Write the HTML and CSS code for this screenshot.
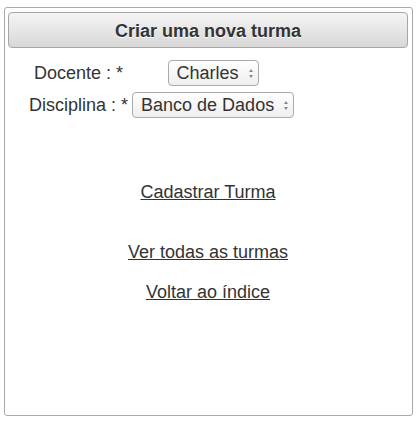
FILE: index.html
```html
<!DOCTYPE html>
<html lang="pt">
<head>
<meta charset="utf-8">
<title>Criar uma nova turma</title>
<link rel="stylesheet" href="styles.css">
</head>
<body>
<div class="panel">
  <div class="header">Criar uma nova turma</div>
  <form class="form">
    <table class="fields">
      <tr>
        <td class="label">Docente : *</td>
        <td class="field"><span class="sel"><select><option>Charles</option></select></span></td>
      </tr>
      <tr>
        <td class="label">Disciplina : *</td>
        <td class="field"><span class="sel"><select><option>Banco de Dados</option></select></span></td>
      </tr>
    </table>
    <div class="links">
      <a href="#" class="link link-submit">Cadastrar Turma</a>
      <a href="#" class="link link-all">Ver todas as turmas</a>
      <a href="#" class="link link-back">Voltar ao índice</a>
    </div>
  </form>
</div>
</body>
</html>
```

FILE: styles.css
```css
html, body {
  margin: 0;
  padding: 0;
  background: #fff;
}

body {
  font-family: "Liberation Sans", Arial, sans-serif;
  font-size: 18px;
  color: #333;
}

.panel {
  box-sizing: border-box;
  width: 409px;
  height: 409px;
  margin: 7px 0 0 4px;
  padding: 4px 4px 0 3px;
  border: 1px solid #aaa;
  border-radius: 3px;
}

.header {
  box-sizing: border-box;
  height: 36px;
  padding-top: 1px;
  line-height: 34px;
  text-align: center;
  font-weight: bold;
  font-size: 18px;
  color: #333;
  text-shadow: 0 1px 0 #fff;
  border: 1px solid #a6a6a6;
  border-radius: 4px;
  background: linear-gradient(#f5f5f5, #d7d7d7);
}

.form {
  margin: 0;
}

.fields {
  margin: 8px 0 0 18px;
  border-spacing: 2px;
}

.fields td {
  padding: 2px 1px;
  text-align: center;
  vertical-align: middle;
  line-height: 21px;
}

.sel {
  position: relative;
  display: inline-block;
  vertical-align: middle;
}

.sel::before,
.sel::after {
  content: "";
  position: absolute;
  right: 6px;
  width: 0;
  height: 0;
  border-left: 2.5px solid transparent;
  border-right: 2.5px solid transparent;
  pointer-events: none;
}

.sel::before {
  top: 9px;
  border-bottom: 3px solid #8a8a8a;
}

.sel::after {
  top: 15px;
  border-top: 3px solid #8a8a8a;
}

.sel select {
  -webkit-appearance: none;
  appearance: none;
  display: block;
  box-sizing: border-box;
  height: 26px;
  margin: 0;
  padding: 0 18px 0 8px;
  font-family: "Liberation Sans", Arial, sans-serif;
  font-size: 18px;
  color: #333;
  border: 1px solid #aaa;
  border-radius: 4px;
  background: linear-gradient(#ffffff, #eeeeee);
  outline: none;
}

.links {
  display: flex;
  flex-direction: column;
  align-items: center;
  margin-top: 60px;
}

.link {
  display: block;
  line-height: 21px;
  color: #333;
  text-decoration: underline;
}

.link-all {
  margin-top: 39px;
}

.link-back {
  margin-top: 19px;
}
```
